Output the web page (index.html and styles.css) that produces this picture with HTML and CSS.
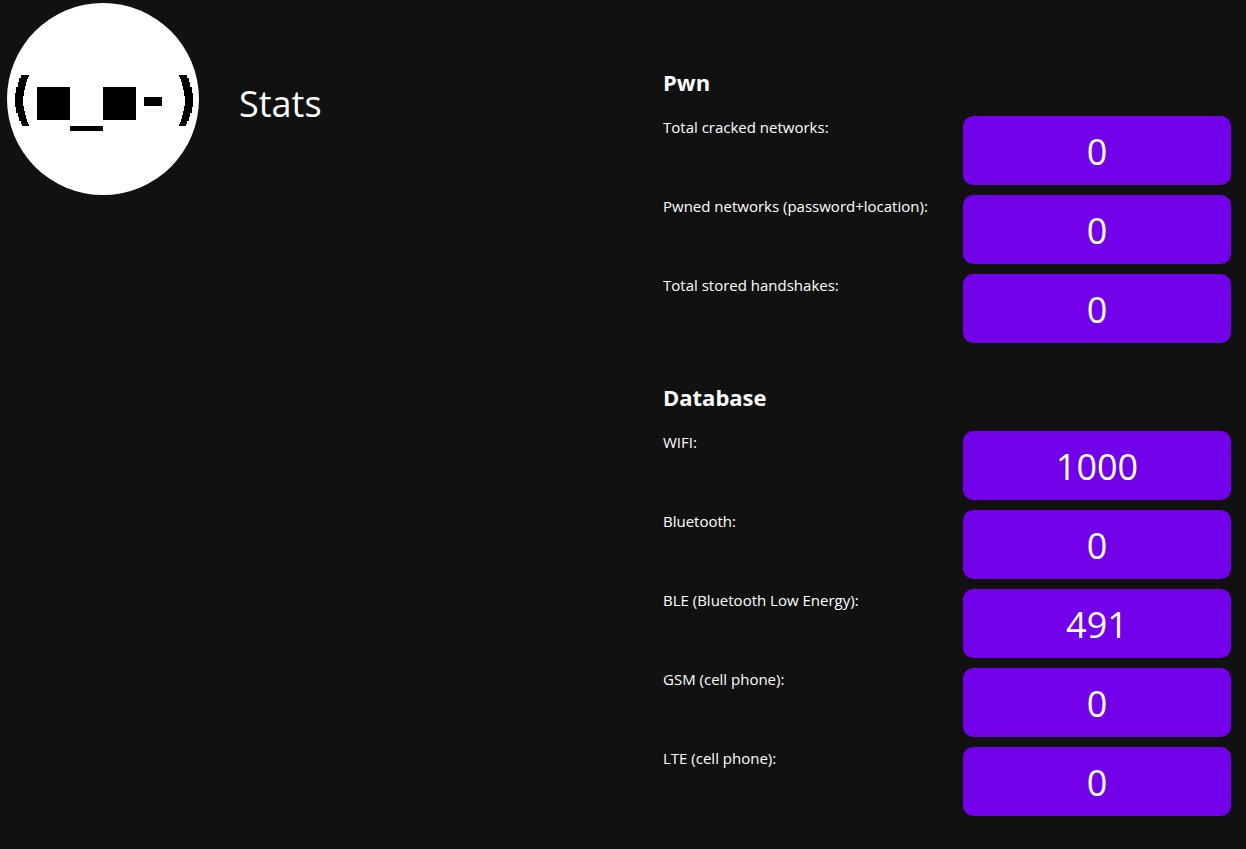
FILE: index.html
```html
<!DOCTYPE html>
<html lang="en">

<head>
  <meta charset="UTF-8">
  <meta name="viewport" content="width=device-width, initial-scale=1.0">
  <title>Stats</title>
  <link rel="stylesheet" href="styles.css">
</head>

<body>
  <div class="container">
    <header class="header">
      <svg class="logo" viewBox="0 0 192 192" role="img" aria-label="Winking face">
        <circle cx="96" cy="96" r="96" fill="#fff" />
        <path d="M15 72h7v2h-1v2h-1v3h-1v4h-1v4h-1v6h-1v10h1v5h1v4h1v4h1v3h1v2h1v2h-7v-2h-1v-3h-2v-4h-1v-4h-2v-6h-1v-14h1v-6h2v-5h1v-4h2v-3h1z" />
        <rect x="30" y="84" width="33" height="33" />
        <rect x="63" y="123" width="33" height="5" />
        <rect x="96" y="84" width="33" height="33" />
        <rect x="137" y="94" width="18" height="9" />
        <path d="M179 72h-7v2h1v2h1v3h1v4h1v4h1v6h1v10h-1v5h-1v4h-1v4h-1v3h-1v2h-1v2h7v-2h1v-3h2v-4h1v-4h2v-6h1v-14h-1v-6h-2v-5h-1v-4h-2v-3h-1z" />
      </svg>
      <h1 class="title">Stats</h1>
    </header>

    <main class="stats">
      <section>
        <h2>Pwn</h2>
        <dl class="grid">
          <dt>Total cracked networks:</dt>
          <dd>0</dd>
          <dt>Pwned networks (password+location):</dt>
          <dd>0</dd>
          <dt>Total stored handshakes:</dt>
          <dd>0</dd>
        </dl>
      </section>

      <section>
        <h2>Database</h2>
        <dl class="grid">
          <dt>WIFI:</dt>
          <dd>1000</dd>
          <dt>Bluetooth:</dt>
          <dd>0</dd>
          <dt>BLE (Bluetooth Low Energy):</dt>
          <dd>491</dd>
          <dt>GSM (cell phone):</dt>
          <dd>0</dd>
          <dt>LTE (cell phone):</dt>
          <dd>0</dd>
        </dl>
      </section>
    </main>
  </div>
</body>

</html>
```
FILE: styles.css
```css
body {
  font-family: "Segoe UI", "Open Sans", sans-serif;
  font-size: 15px;
  line-height: 22px;
  color: #fff;
  background-color: #111;
  margin: 0;
}

.container {
  display: grid;
  grid-template-columns: 1fr 1fr;
}

.header {
  display: flex;
  align-items: center;
  align-self: start;
  gap: 40px;
  padding: 3px 7px;
}

.logo {
  width: 192px;
  height: 192px;
}

.title {
  font-size: 36px;
  font-weight: normal;
  line-height: 48px;
  margin: 10px 0 0;
}

.stats {
  display: flex;
  flex-direction: column;
  gap: 38px;
  padding: 66px 15px 32px 40px;
}

h2 {
  font-size: 22px;
  line-height: 32px;
  margin: 0 0 18px;
}

.grid {
  display: grid;
  grid-template-columns: 1fr 1fr;
  gap: 10px 32px;
  margin: 0;
}

dt {
  white-space: nowrap;
}

dd {
  margin: 0;
  padding: 11px 10px 9px;
  font-size: 36px;
  line-height: 49px;
  text-align: center;
  background-color: #7200e8;
  border-radius: 10px;
}
```
